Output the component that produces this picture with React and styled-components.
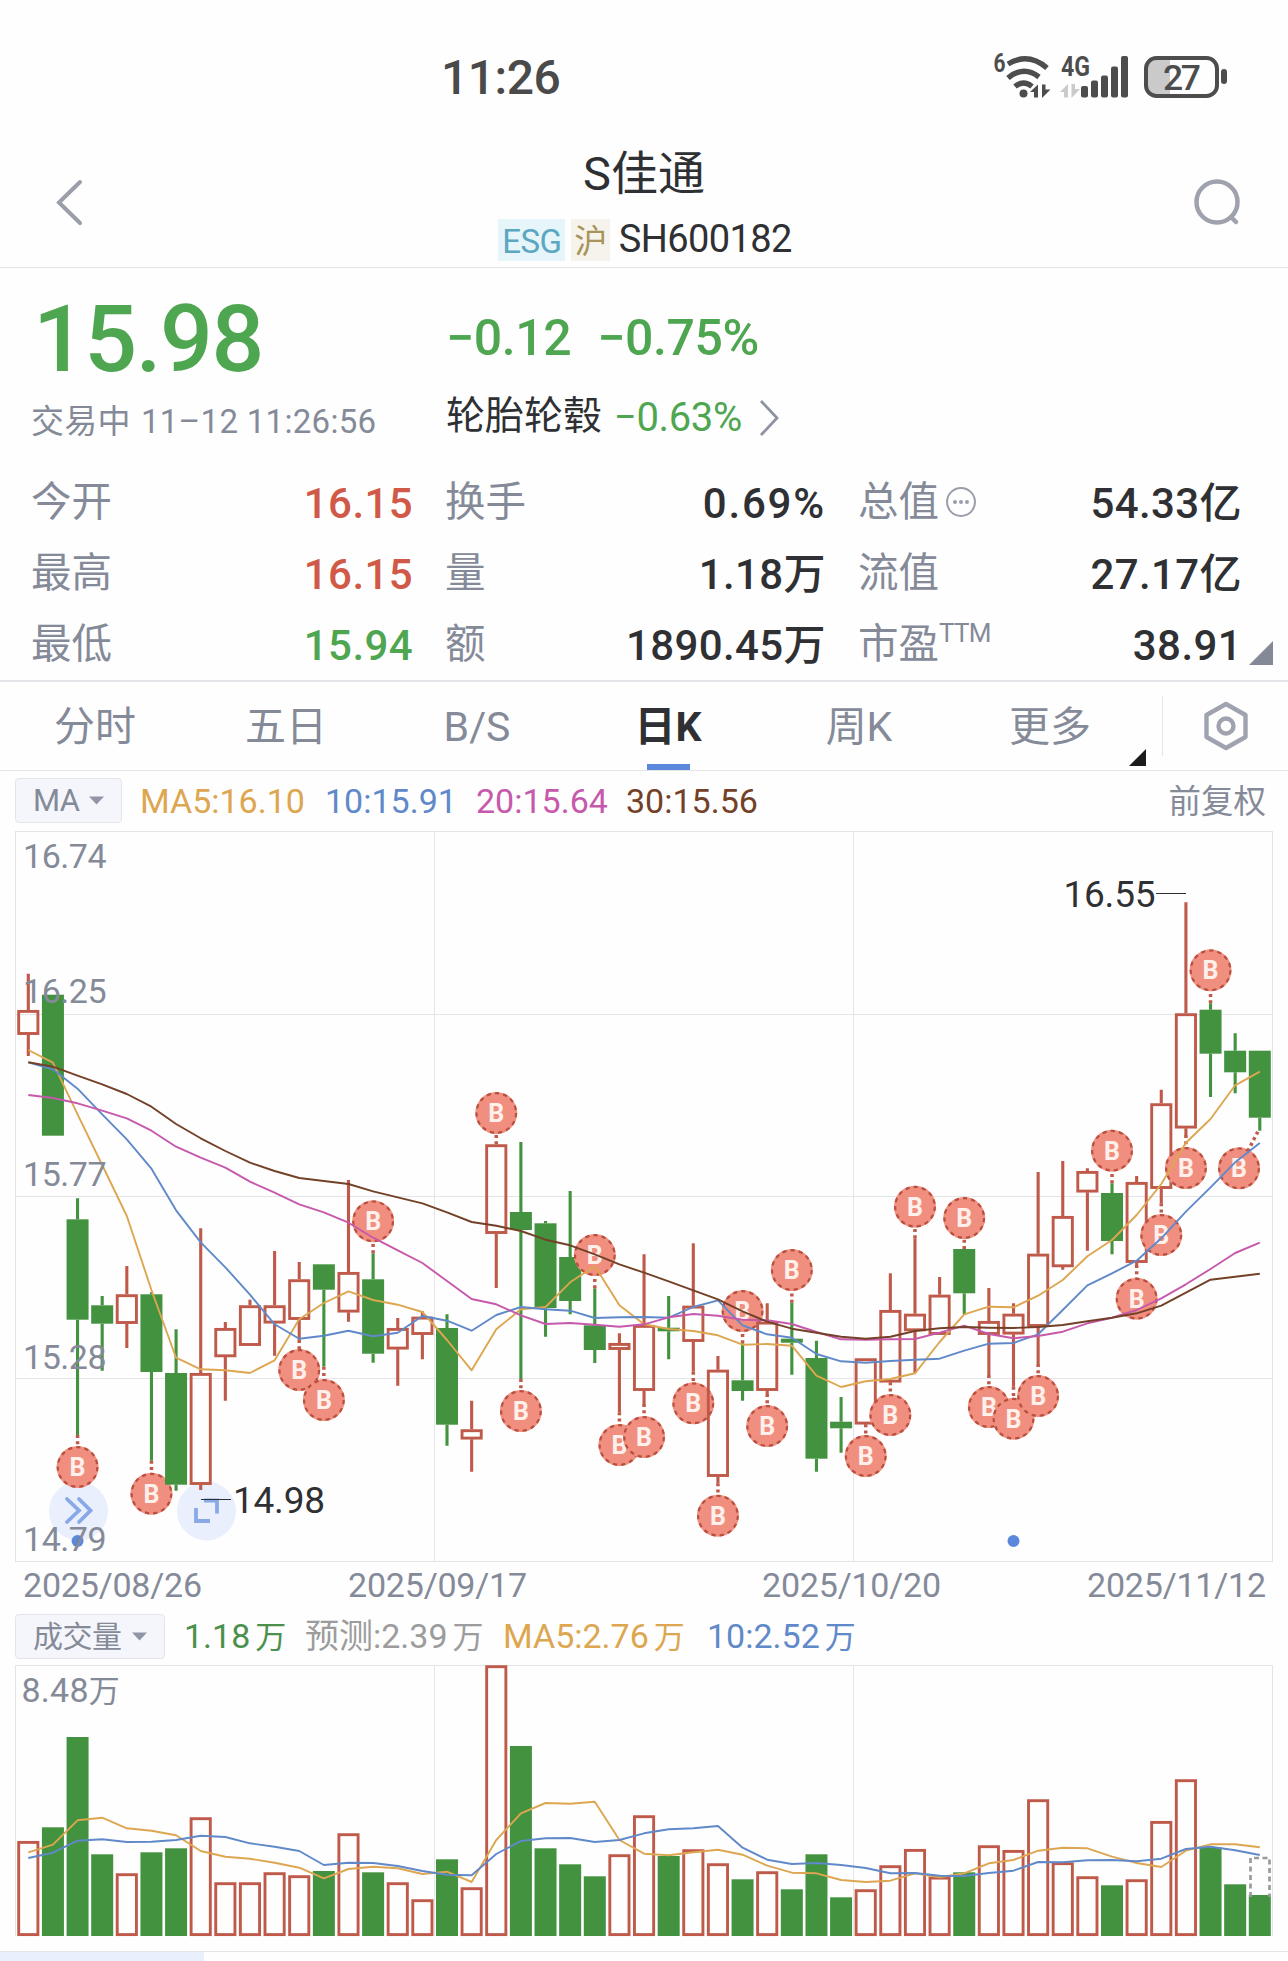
import styled, { createGlobalStyle } from 'styled-components'

const colors = {
  text: '#2f3033',
  muted: '#858a99',
  line: '#e4e5e9',
  up: '#d05a47',
  down: '#4fa651',
  candleUp: '#bf5a4a',
  candleDown: '#42923f',
  blue: '#5b87dc',
  ma5: '#dda650',
  ma10: '#6089c9',
  ma20: '#c659ab',
  ma30: '#734028',
}

const fonts = `Roboto, 'Noto Sans CJK SC', sans-serif`

const GlobalStyle = createGlobalStyle`
  * {
    box-sizing: border-box;
  }
  body {
    margin: 0;
    background: #fefefe;
    color: ${colors.text};
    font-family: ${fonts};
    overflow: hidden;
  }
`

const Page = styled.div`
  display: flex;
  flex-direction: column;
  width: 1288px;
  height: 1961px;
  overflow: hidden;
  > * {
    flex-shrink: 0;
  }
`

const StatusBar = styled.div`
  display: flex;
  align-items: center;
  justify-content: space-between;
  height: 106px;
  padding: 50px 58px 0 441px;
`

const Clock = styled.span`
  font-size: 48px;
  font-weight: 500;
  line-height: 56px;
  letter-spacing: -0.5px;
  color: #4a4a4a;
`

const Header = styled.header`
  display: flex;
  align-items: flex-start;
  justify-content: space-between;
  height: 162px;
  padding: 0 46px 0 53px;
  border-bottom: 1px solid ${colors.line};
`

const HeaderIcon = styled.svg`
  margin-top: 70px;
`

const TitleBlock = styled.div`
  display: flex;
  flex-direction: column;
  align-items: center;
  margin-left: 13px;
`

const Title = styled.h1`
  margin: 40px 0 0;
  font-size: 47px;
  font-weight: 400;
  line-height: 56px;
`

const CodeLine = styled.div`
  display: flex;
  align-items: center;
  margin: 17px 0 0 2px;
`

const Tag = styled.span`
  height: 42px;
  padding: 0 ${({ $pad }) => $pad}px;
  margin-right: 6px;
  font-size: 33px;
  line-height: 45px;
  letter-spacing: -0.6px;
  color: ${({ $color }) => $color};
  background: ${({ $background }) => $background};
`

const Code = styled.span`
  margin: 0 0 2px 3px;
  font-size: 38px;
  line-height: 40px;
  letter-spacing: -0.6px;
`

const Quote = styled.section`
  height: 414px;
  padding: 25px 44px 0 31px;
  border-bottom: 2px solid ${colors.line};
  position: relative;
`

const QuoteTop = styled.div`
  display: grid;
  grid-template-columns: 415px 1fr;
`

const Price = styled.div`
  margin-left: 2px;
  font-size: 93px;
  font-weight: 500;
  line-height: 94px;
  letter-spacing: -1.5px;
  color: ${colors.down};
`

const Changes = styled.div`
  display: flex;
  gap: 26px;
  padding-top: 3px;
  font-size: 50px;
  font-weight: 500;
  line-height: 84px;
  letter-spacing: -0.4px;
  color: ${colors.down};
`

const TradeTime = styled.div`
  display: flex;
  gap: 10px;
  padding-top: 14px;
  font-size: 33px;
  line-height: 42px;
  letter-spacing: 0.3px;
  white-space: pre;
  color: ${colors.muted};
`

const Sector = styled.div`
  display: flex;
  align-items: center;
  height: 49px;
  margin-top: 6px;
  font-size: 39px;
  line-height: 44px;
  white-space: nowrap;
`

const SectorName = styled.span`
  padding-bottom: 4px;
`

const SectorChange = styled.span`
  margin: 0 17px 0 12px;
  color: ${colors.down};
  font-size: 40px;
  letter-spacing: -0.4px;
`

const Stats = styled.div`
  display: grid;
  grid-template-columns: 382px 381px 384px;
  column-gap: 32px;
  grid-auto-rows: 71px;
  align-items: center;
  padding-top: 25px;
`

const Stat = styled.div`
  display: flex;
  justify-content: space-between;
  white-space: nowrap;
`

const StatLabel = styled.span`
  display: flex;
  align-items: center;
  padding-bottom: 3px;
  font-size: 40.5px;
  line-height: 48px;
  color: ${colors.muted};
`

const StatValue = styled.span`
  font-size: 42px;
  font-weight: 500;
  line-height: 52px;
  letter-spacing: ${({ $spacing }) => $spacing || 0.4}px;
  color: ${({ $tone }) => colors[$tone] || colors.text};
`

const Sup = styled.sup`
  align-self: flex-start;
  font-size: 26px;
  line-height: 26px;
  letter-spacing: -0.8px;
`

const Corner = styled.span`
  position: absolute;
  right: ${({ $right }) => $right}px;
  bottom: ${({ $bottom }) => $bottom}px;
  border-left: ${({ $size }) => $size}px solid transparent;
  border-bottom: ${({ $size }) => $size}px solid ${({ $color }) => $color};
`

const Tabs = styled.nav`
  display: flex;
  height: 89px;
  border-bottom: 1px solid ${colors.line};
`

const Tab = styled.div`
  position: relative;
  display: flex;
  justify-content: center;
  width: 191px;
  padding-right: 1px;
  font-size: 41px;
  line-height: 91px;
  font-weight: ${({ $active }) => ($active ? 700 : 400)};
  color: ${({ $active }) => ($active ? colors.text : colors.muted)};
  &::after {
    content: '';
    display: ${({ $active }) => ($active ? 'block' : 'none')};
    position: absolute;
    bottom: 0;
    width: 43px;
    height: 6px;
    background: ${colors.blue};
  }
`

const Settings = styled.div`
  display: flex;
  align-items: center;
  justify-content: center;
  flex: 1;
  height: 60px;
  margin: 14px 0 0 16px;
  border-left: 1px solid ${colors.line};
`

const Legend = styled.div`
  display: flex;
  align-items: center;
  height: ${({ $height }) => $height}px;
  padding: 0 22px 0 15px;
  font-size: 34px;
  line-height: 40px;
  white-space: nowrap;
`

const Picker = styled.button`
  display: flex;
  align-items: center;
  justify-content: space-between;
  width: ${({ $width }) => $width}px;
  height: 45px;
  padding: 0 17px 0 17px;
  border: 1px solid ${colors.line};
  border-radius: 4px;
  background: #f5f6fb;
  color: ${colors.muted};
  font-family: inherit;
  font-size: ${({ $size }) => $size}px;
  line-height: 40px;
  letter-spacing: -0.5px;
`

const LegendItem = styled.span`
  width: ${({ $width }) => $width}px;
  margin-left: ${({ $gap }) => $gap}px;
  color: ${({ $color }) => $color};
`

const Unit = styled.span`
  margin-left: 5px;
  font-size: 31px;
`

const Adjust = styled.span`
  margin-left: auto;
  padding-top: 2px;
  font-size: 32.5px;
  color: ${colors.muted};
`

const Plot = styled.svg`
  display: block;
  flex: none;
  text {
    font-family: ${fonts};
  }
`

const Dates = styled.div`
  display: grid;
  grid-template-columns: 325px 414px 325px 1fr;
  height: 46px;
  padding-left: 23px;
  font-size: 34px;
  line-height: 46px;
  letter-spacing: -0.2px;
  color: ${colors.muted};
`

const Footer = styled.footer`
  height: 10px;
  margin-top: 14px;
  border-top: 1px solid ${colors.line};
`

const Progress = styled.div`
  width: 204px;
  height: 9px;
  background: #e9effc;
`

const stats = [
  { label: '今开', value: '16.15', tone: 'up' },
  { label: '换手', value: '0.69%', spacing: 1.8 },
  { label: '总值', value: '54.33亿', info: true },
  { label: '最高', value: '16.15', tone: 'up' },
  { label: '量', value: '1.18万' },
  { label: '流值', value: '27.17亿' },
  { label: '最低', value: '15.94', tone: 'down' },
  { label: '额', value: '1890.45万' },
  { label: '市盈', value: '38.91', sup: 'TTM' },
]

const tabs = ['分时', '五日', 'B/S', '日K', '周K', '更多']

// [up, high, body top, body bottom, low, badge y]
const candles = [
  [1, 973.7, 1010, 1034.7, 1056],
  [0, 994.7, 994.7, 1135.7, 1135.7],
  [0, 1198.3, 1219.3, 1319.7, 1435, 1467],
  [0, 1296, 1305.3, 1323.7, 1370.7],
  [1, 1266, 1294.3, 1323.7, 1348],
  [0, 1292.3, 1294.3, 1372, 1460.7, 1493.7],
  [0, 1329.3, 1373, 1484.7, 1490.7],
  [1, 1228.3, 1373, 1484.7, 1490],
  [1, 1322, 1328, 1357, 1400.7],
  [1, 1299.7, 1305.3, 1345.7, 1345.7],
  [1, 1251, 1305.3, 1323.3, 1355.7],
  [1, 1262, 1279.3, 1319.7, 1340, 1370],
  [0, 1264.3, 1264.3, 1289.7, 1366.7, 1400],
  [1, 1180, 1272, 1312.3, 1321.7],
  [0, 1253.3, 1279.3, 1353.7, 1362.7, 1221.3],
  [1, 1318, 1328, 1349.3, 1385.7],
  [1, 1311.3, 1316.7, 1334.7, 1359.3],
  [0, 1314.3, 1328, 1424.7, 1445.7],
  [1, 1400.7, 1429.3, 1439.3, 1471.7],
  [1, 1144.3, 1144.3, 1233.7, 1288, 1113],
  [0, 1142, 1212, 1230, 1379, 1411],
  [0, 1221, 1223.3, 1308, 1336.7],
  [0, 1191, 1257, 1301, 1314.3],
  [0, 1288.3, 1325.3, 1350, 1363, 1255],
  [1, 1333.3, 1343, 1349.7, 1412.3, 1445],
  [1, 1254.3, 1325, 1390.7, 1404, 1437],
  [0, 1296, 1327.7, 1331.3, 1359.3],
  [1, 1243.3, 1305.7, 1341.7, 1371.7, 1403.3],
  [1, 1356, 1369.7, 1476.7, 1483.3, 1515.7],
  [0, 1343.3, 1380.3, 1391, 1400.7, 1311],
  [1, 1303.3, 1321.7, 1390.7, 1394, 1426],
  [0, 1302.7, 1338.7, 1342.7, 1374.7, 1270],
  [0, 1340.7, 1358, 1458.7, 1471.7],
  [0, 1397, 1421.7, 1428.3, 1452.7],
  [1, 1358.3, 1358.3, 1424.3, 1424.3, 1456],
  [1, 1273.3, 1310, 1382.3, 1382.3, 1415],
  [1, 1238.3, 1313.7, 1331, 1372.7, 1206.7],
  [1, 1277, 1294.7, 1334.7, 1334.7],
  [0, 1249, 1249, 1293.3, 1314, 1218],
  [1, 1288, 1321, 1334.7, 1375, 1407],
  [1, 1303.3, 1313.7, 1334.3, 1386.7, 1418.7],
  [1, 1172, 1253.7, 1326.7, 1364, 1396],
  [1, 1161, 1216, 1267, 1269.7],
  [1, 1168.3, 1171, 1192.3, 1250.7],
  [0, 1183.3, 1193, 1241, 1254.3, 1150.7],
  [1, 1176, 1182, 1262.7, 1265, 1298.7],
  [1, 1089.7, 1103.3, 1188.7, 1203.3, 1235],
  [1, 902.3, 1013.3, 1128.3, 1135, 1168],
  [0, 1003.3, 1009.7, 1053.7, 1097, 970.3],
  [0, 1033.3, 1050.7, 1072.3, 1093.3],
  [0, 1050.7, 1050.7, 1117.7, 1130.7],
]

const priceLines = {
  ma5: [
    1050, 1062.7, 1114.3, 1165, 1216, 1290, 1357.7, 1369.3, 1370.3, 1373, 1360.3, 1319.3, 1303,
    1291.3, 1300, 1304.7, 1312, 1340, 1370.3, 1329.3, 1309.3, 1307, 1282.3, 1266, 1305.3, 1324.3,
    1329, 1331, 1335.3, 1344.7, 1344, 1345.7, 1375.7, 1387, 1381.3, 1379, 1373.3, 1342, 1314.3,
    1306.7, 1307.3, 1295.7, 1280, 1256.3, 1240, 1215, 1184, 1142.7, 1119, 1085.3, 1071.7,
  ],
  ma10: [
    1062.3, 1069.3, 1088.7, 1114.3, 1139.3, 1168.7, 1210.3, 1242.3, 1267.3, 1294.7, 1324.3, 1338.7,
    1335.7, 1330.7, 1336.3, 1332.7, 1316, 1320.7, 1330.7, 1315, 1307, 1309.3, 1310.7, 1318, 1317.3,
    1317, 1317.7, 1307, 1300.3, 1325.3, 1334.3, 1337.7, 1354, 1361.3, 1362.7, 1361, 1359.7, 1358.7,
    1350.7, 1343.7, 1343, 1334.3, 1310, 1285.3, 1273.3, 1260.7, 1238.3, 1211.7, 1187.3, 1162.3, 1143,
  ],
  ma20: [
    1095, 1098, 1103.3, 1110.7, 1118.3, 1130.7, 1146.7, 1157.7, 1167.7, 1181.7, 1192.7, 1204.3,
    1212.3, 1222.7, 1237.7, 1250.3, 1263, 1281, 1299, 1304.3, 1315.3, 1324, 1323, 1324.7, 1326.7,
    1324.3, 1317.3, 1314, 1315.7, 1319.7, 1320.3, 1324, 1332, 1339.3, 1339.7, 1339.3, 1339, 1332.7,
    1325.7, 1334, 1338.3, 1336, 1331.7, 1323.3, 1317.7, 1310, 1298.3, 1284.3, 1269, 1253, 1242.7,
  ],
  ma30: [
    1062.3, 1066.7, 1075.7, 1084.3, 1094, 1106.7, 1124, 1138.3, 1151, 1162.7, 1171, 1178, 1181,
    1184, 1191.3, 1197.3, 1203.3, 1212.3, 1222, 1225.7, 1231, 1239.7, 1245.3, 1254.3, 1264.3,
    1272.7, 1281.3, 1290.3, 1299.3, 1311.3, 1321.7, 1328.7, 1332.7, 1336.7, 1338.7, 1336.7, 1331,
    1328.3, 1327, 1327.7, 1328, 1327, 1325, 1321.3, 1317.7, 1313.3, 1305.7, 1292.7, 1279.7, 1276.7,
    1273.7,
  ],
}

const volumeTops = [
  1841, 1827.3, 1737, 1854.3, 1873.3, 1852.3, 1848.3, 1817.3, 1882.3, 1882.3, 1872.3, 1875.3, 1871,
  1833.3, 1872.3, 1882.3, 1899.3, 1859.3, 1887.3, 1665.3, 1746, 1848.3, 1864.3, 1876.3, 1854.3,
  1815.3, 1856, 1849.3, 1863.3, 1879.3, 1871.3, 1889.3, 1854.3, 1897.3, 1889.3, 1865.3, 1849,
  1876.7, 1872.3, 1845.3, 1850, 1799.3, 1862.3, 1876.3, 1885.3, 1879.3, 1821, 1779.3, 1847.3,
  1884.3, 1895,
]

const volumeLines = {
  ma5: [
    1852.3, 1844.7, 1820.3, 1817.7, 1828.3, 1830.7, 1835.3, 1851, 1856.7, 1858.7, 1862.7, 1867.7,
    1878.3, 1869, 1866.7, 1868.3, 1874, 1871.7, 1882, 1840, 1813.3, 1803, 1803.7, 1801.7, 1840,
    1853.7, 1855.3, 1852.3, 1849.7, 1854.7, 1865.7, 1872.7, 1873.3, 1880, 1882, 1880.7, 1873.3,
    1877.3, 1873.3, 1863.3, 1860, 1850.7, 1847.7, 1848.3, 1856.7, 1863, 1867, 1850.7, 1844.3,
    1844.3, 1847.3,
  ],
  ma10: [
    1858, 1852.7, 1840.7, 1839.3, 1842, 1841.7, 1840, 1835.7, 1837, 1843.3, 1846.7, 1851, 1865,
    1862.7, 1863, 1866, 1871, 1874.7, 1875.3, 1854, 1841, 1838.3, 1838, 1842, 1840, 1833.3, 1829.3,
    1828.3, 1826, 1847.7, 1859.7, 1864, 1863, 1865, 1868, 1873.3, 1873, 1875.7, 1876, 1873, 1870.7,
    1862, 1862.3, 1860.3, 1860, 1861.3, 1858.7, 1849, 1846.7, 1850.3, 1855,
  ],
}

const axisLabels = [
  ['16.74', 867.5],
  ['16.25', 1003],
  ['15.77', 1186],
  ['15.28', 1368.5],
  ['14.79', 1550.5],
]

const xAt = (index) => 28.3 + index * 24.63

const toPoints = (values) => values.map((y, index) => `${xAt(index)},${y}`).join(' ')

function StatusIcons() {
  return (
    <svg width="240" height="56" viewBox="990 50 240 56" fill="#4d4d4d" fontFamily="Roboto">
      <text x="993.5" y="72" fontSize="25" fontWeight="700" textLength="12" lengthAdjust="spacingAndGlyphs">6</text>
      <g fill="none" stroke="#4d4d4d" strokeWidth="5.4">
        <path d="M1008 64 Q1028 52 1047 68" />
        <path d="M1008 78 Q1023.5 65 1039 77" />
        <path d="M1015 86.5 Q1023.5 79.5 1032 86.5" />
      </g>
      <circle cx="1023.5" cy="93.5" r="4" />
      <path d="M1030 92 L1038 84.5 V97.5 H1034 V92 Z M1042 84.5 H1045.5 V89.5 H1050.5 L1042 98 Z" />
      <text x="1061" y="76" fontSize="27" fontWeight="700" textLength="29" lengthAdjust="spacingAndGlyphs">4G</text>
      <path fill="#cbcbcb" d="M1060 92 L1068 84 V97.5 H1064 V92 Z M1071.5 84 H1075 V89 H1080 L1071.5 98 Z" />
      <rect x="1081" y="86" width="7" height="11.5" rx="2" />
      <rect x="1091" y="80.5" width="7" height="17" rx="2" />
      <rect x="1101" y="75.5" width="7" height="22" rx="2" />
      <rect x="1111" y="66.5" width="7" height="31" rx="2" />
      <rect x="1121" y="56" width="7" height="41.5" rx="2" />
      <path fill="#cacaca" d="M1170 59 H1156 Q1146 59 1146 69 V85 Q1146 96 1156 96 H1170 Z" />
      <rect x="1146" y="58" width="71" height="38" rx="10.5" fill="none" stroke="#4d4d4d" strokeWidth="4" />
      <rect x="1221" y="69" width="6" height="15" rx="3" />
      <text x="1163" y="89.5" fontSize="35.5" fontWeight="500" textLength="38">27</text>
    </svg>
  )
}

function Caret() {
  return (
    <svg width="15" height="9" viewBox="0 0 15 9">
      <path d="M0 0.5 H15 L7.5 8.5 Z" fill="#9195a5" />
    </svg>
  )
}

function Badge({ x, y, fromX, fromY }) {
  return (
    <g>
      <line x1={fromX} y1={fromY} x2={x} y2={y} stroke={colors.candleUp} strokeWidth="3.5" strokeDasharray="3 3.3" />
      <circle cx={x} cy={y} r="21" fill="#f08f7f" />
      <circle cx={x} cy={y} r="19.8" fill="none" stroke="#b9503f" strokeWidth="2.2" strokeDasharray="4.3 4" />
      <text x={x} y={y + 9} fontSize="25" fontWeight="700" fill="#fff0eb" textAnchor="middle">B</text>
    </g>
  )
}

function Candle({ candle, index }) {
  const [up, high, top, bottom, low, badge] = candle
  const x = xAt(index)
  const color = up ? colors.candleUp : colors.candleDown
  const isLast = index === candles.length - 1

  return (
    <g>
      <path d={`M${x} ${high} V${top} M${x} ${bottom} V${low}`} stroke={color} strokeWidth="3.1" />
      {up ? (
        <rect x={x - 9.6} y={top + 1.4} width="19.2" height={bottom - top - 2.6} fill="none" stroke={color} strokeWidth="2.9" />
      ) : (
        <rect x={x - 11} y={top} width="22" height={bottom - top} fill={color} />
      )}
      {badge && <Badge x={x} y={badge} fromX={x} fromY={badge < high ? high : low} />}
      {/* the latest marker is pulled left so that it stays inside the frame */}
      {isLast && <Badge x={1239} y={1168.3} fromX={x - 2} fromY={low + 1} />}
    </g>
  )
}

function PriceChart() {
  return (
    <Plot width="1288" height="732" viewBox="0 830 1288 732">
      <g fill="none" stroke={colors.line}>
        <path d="M15 1014.5 H1273 M15 1196.5 H1273 M15 1378.5 H1273 M434.5 831 V1561 M853.5 831 V1561" />
        <rect x="15.5" y="831.5" width="1257" height="730" />
      </g>
      <g fill="#e9effc">
        <circle cx="78.5" cy="1511" r="29.5" />
        <circle cx="206.5" cy="1511" r="29.5" />
      </g>
      <g fill="none" stroke="#88a9e6" strokeWidth="3.8">
        <path d="M67 1499 L79 1510.5 L67 1522 M79 1499 L90.5 1510.5 L79 1522" strokeLinecap="round" />
        <path d="M204 1500.5 H217 V1513.5 M196 1508 V1521 H210" />
      </g>
      {candles.map((candle, index) => (
        <Candle key={index} candle={candle} index={index} />
      ))}
      <g fill={colors.blue}>
        <circle cx={xAt(2)} cy="1541" r="6" />
        <circle cx={xAt(40)} cy="1541" r="6" />
      </g>
      {Object.entries(priceLines).map(([name, values]) => (
        <polyline key={name} points={toPoints(values)} fill="none" stroke={colors[name]} strokeWidth="1.9" strokeLinejoin="round" />
      ))}
      {axisLabels.map(([label, y]) => (
        <text key={label} x="23" y={y} fontSize="34" textLength="83.5" fill={colors.muted}>{label}</text>
      ))}
      <g fill={colors.text} fontSize="37">
        <text x="1063.5" y="906.5" textLength="92">16.55</text>
        <text x="233" y="1512.5" textLength="92">14.98</text>
      </g>
      <path d="M1156 893.5 H1186 M201 1499.5 H231" stroke={colors.text} />
    </Plot>
  )
}

function VolumeChart() {
  return (
    <Plot width="1288" height="272" viewBox="0 1665 1288 272">
      <path
        d="M15.5 1936 V1665.5 H1272.5 V1936 M434.5 1665 V1936 M853.5 1665 V1936"
        fill="none"
        stroke={colors.line}
      />
      {volumeTops.map((top, index) =>
        candles[index][0] ? (
          <rect key={index} x={xAt(index) - 9.6} y={top + 1.4} width="19.2" height={1936 - top - 2.8} fill="none" stroke={colors.candleUp} strokeWidth="2.9" />
        ) : (
          <rect key={index} x={xAt(index) - 11} y={top} width="22" height={1936 - top} fill={colors.candleDown} />
        )
      )}
      <path d="M1250.5 1897 V1858 H1269.5 V1897" fill="none" stroke="#9a9a9a" strokeWidth="2.7" strokeDasharray="5 3.5" />
      {Object.entries(volumeLines).map(([name, values]) => (
        <polyline key={name} points={toPoints(values)} fill="none" stroke={colors[name]} strokeWidth="1.9" strokeLinejoin="round" />
      ))}
      <text x="21.5" y="1701.5" fontSize="34" fill={colors.muted}>
        <tspan textLength="67">8.48</tspan>
        <tspan fontSize="31">万</tspan>
      </text>
    </Plot>
  )
}

function App() {
  return (
    <Page>
      <GlobalStyle />
      <StatusBar>
        <Clock>11:26</Clock>
        <StatusIcons />
      </StatusBar>

      <Header>
        <HeaderIcon width="32" height="52" viewBox="0 0 32 52">
          <path d="M27 6 L6 26.5 L27 47" fill="none" stroke="#9b9da8" strokeWidth="4" strokeLinecap="round" />
        </HeaderIcon>
        <TitleBlock>
          <Title>S佳通</Title>
          <CodeLine>
            <Tag $pad={4} $color="#5ba6c1" $background="#e5f5f9">ESG</Tag>
            <Tag $pad={3} $color="#a89459" $background="#f6f3ec">沪</Tag>
            <Code>SH600182</Code>
          </CodeLine>
        </TitleBlock>
        <HeaderIcon width="52" height="52" viewBox="0 0 52 52">
          <g fill="none" stroke="#9fa1ac" strokeWidth="4.5" strokeLinecap="round">
            <circle cx="27" cy="26" r="20.5" />
            <path d="M41 41 L46 46" />
          </g>
        </HeaderIcon>
      </Header>

      <Quote>
        <QuoteTop>
          <Price>15.98</Price>
          <Changes>
            <span>−0.12</span>
            <span>−0.75%</span>
          </Changes>
          <TradeTime>
            <span>交易中</span>
            <span>11–12 11:26:56</span>
          </TradeTime>
          <Sector>
            <SectorName>轮胎轮毂</SectorName>
            <SectorChange>−0.63%</SectorChange>
            <svg width="21" height="38" viewBox="0 0 21 38">
              <path d="M2 2 L18 19 L2 36" fill="none" stroke="#8f93a1" strokeWidth="2.8" />
            </svg>
          </Sector>
        </QuoteTop>
        <Stats>
          {stats.map(({ label, value, tone, spacing, info, sup }) => (
            <Stat key={label}>
              <StatLabel>
                {label}
                {sup && <Sup>{sup}</Sup>}
                {info && (
                  <svg width="42" height="32" viewBox="-7 0 42 32">
                    <circle cx="15" cy="16" r="14" fill="none" stroke="#9a9eaa" strokeWidth="2" />
                    <path d="M9 16 h0 M15 16 h0 M21 16 h0" stroke="#9a9eaa" strokeWidth="4" strokeLinecap="round" />
                  </svg>
                )}
              </StatLabel>
              <StatValue $tone={tone} $spacing={spacing}>{value}</StatValue>
            </Stat>
          ))}
        </Stats>
        <Corner $right={15} $bottom={15} $size={24} $color="#858997" />
      </Quote>

      <Tabs>
        {tabs.map((tab) => (
          <Tab key={tab} $active={tab === '日K'}>
            {tab}
            {tab === '更多' && <Corner $right={0} $bottom={4} $size={17} $color="#1c1c1c" />}
          </Tab>
        ))}
        <Settings>
          <svg width="46" height="50" viewBox="0 0 46 50">
            <g fill="none" stroke="#9fa2af" strokeWidth="4.4" strokeLinejoin="round">
              <path d="M23 3 L42.5 14 V36 L23 47 L3.5 36 V14 Z" />
              <circle cx="23" cy="25" r="7.5" />
            </g>
          </svg>
        </Settings>
      </Tabs>

      <Legend $height={59}>
        <Picker $width={107} $size={31}>
          MA
          <Caret />
        </Picker>
        <LegendItem $width={167} $gap={18} $color={colors.ma5}>MA5:16.10</LegendItem>
        <LegendItem $width={131} $gap={18} $color={colors.ma10}>10:15.91</LegendItem>
        <LegendItem $width={132} $gap={20} $color={colors.ma20}>20:15.64</LegendItem>
        <LegendItem $width={132} $gap={18} $color={colors.ma30}>30:15.56</LegendItem>
        <Adjust>前复权</Adjust>
      </Legend>
      <PriceChart />
      <Dates>
        <span>2025/08/26</span>
        <span>2025/09/17</span>
        <span>2025/10/20</span>
        <span>2025/11/12</span>
      </Dates>

      <Legend $height={57}>
        <Picker $width={150} $size={30}>
          成交量
          <Caret />
        </Picker>
        <LegendItem $width={101} $gap={19} $color="#4c904d">1.18<Unit>万</Unit></LegendItem>
        <LegendItem $width={178} $gap={20} $color="#9c9c9c">预测:2.39<Unit>万</Unit></LegendItem>
        <LegendItem $width={184} $gap={20} $color={colors.ma5}>MA5:2.76<Unit>万</Unit></LegendItem>
        <LegendItem $width={150} $gap={20} $color={colors.ma10}>10:2.52<Unit>万</Unit></LegendItem>
      </Legend>
      <VolumeChart />
      <Footer>
        <Progress />
      </Footer>
    </Page>
  )
}

export default App
